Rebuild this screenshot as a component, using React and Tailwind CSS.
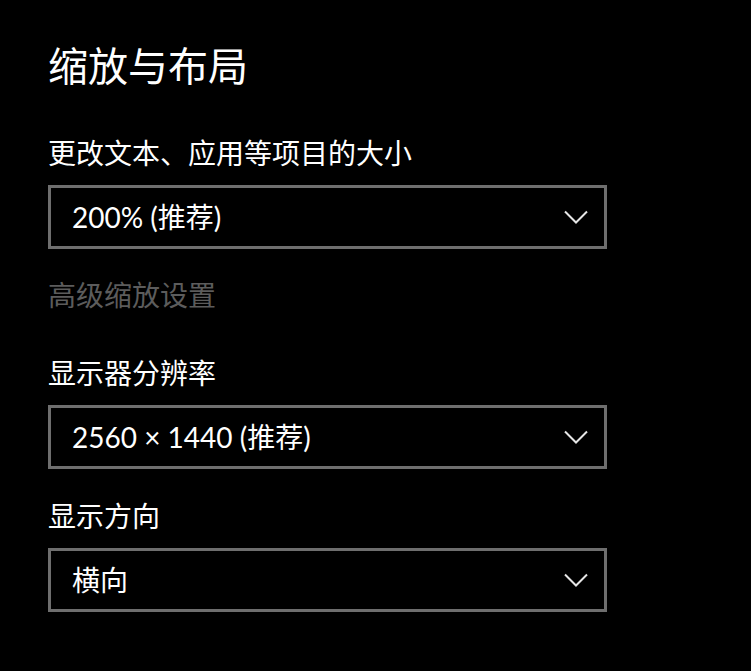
const font = "font-['Lato','Noto_Sans_CJK_SC',sans-serif]";

function Chevron() {
  return (
    <svg width="24" height="14" viewBox="0 0 24 14" fill="none" className="mr-[16px]">
      <path d="M1 1.5 L12 12.5 L23 1.5" stroke="#e6e6e6" strokeWidth="2" />
    </svg>
  );
}

function Dropdown({ value, className = "" }) {
  return (
    <div className={`flex h-[64px] w-[559px] items-center justify-between border-[3px] border-[#6e6e6e] pl-[21px] ${className}`}>
      <span className="text-[28px] leading-[40px] text-white">{value}</span>
      <Chevron />
    </div>
  );
}

export default function App() {
  return (
    <div className={`min-h-[671px] w-full bg-black pl-[48px] pt-[40px] text-white ${font}`}>
      <h1 className="text-[40px] leading-[52px] font-normal">缩放与布局</h1>

      <p className="mt-[41px] text-[28px] leading-[40px]">更改文本、应用等项目的大小</p>
      <Dropdown value="200% (推荐)" className="mt-[12px]" />

      <p className="mt-[26px] text-[28px] leading-[40px] text-[#5c5c5c]">高级缩放设置</p>

      <p className="mt-[38px] text-[28px] leading-[40px]">显示器分辨率</p>
      <Dropdown value="2560 × 1440 (推荐)" className="mt-[12px]" />

      <p className="mt-[27px] text-[28px] leading-[40px]">显示方向</p>
      <Dropdown value="横向" className="mt-[12px]" />
    </div>
  );
}
